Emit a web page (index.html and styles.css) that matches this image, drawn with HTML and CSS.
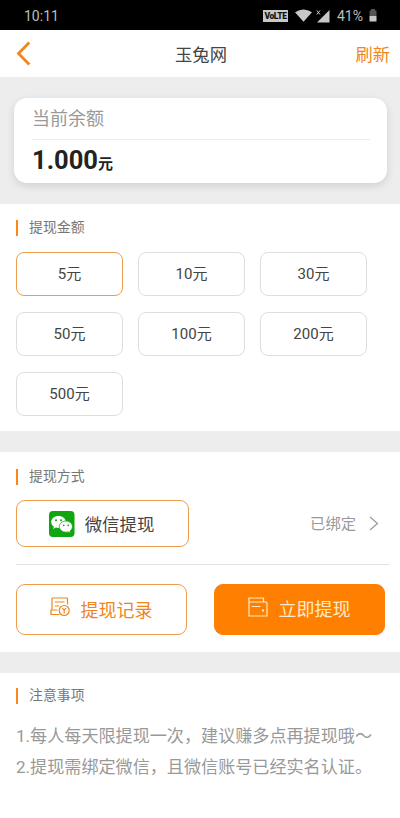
FILE: index.html
```
<!DOCTYPE html>
<html lang="zh-CN">
<head>
<meta charset="utf-8">
<meta name="viewport" content="width=device-width, initial-scale=1">
<title>玉兔网</title>
<link rel="stylesheet" href="styles.css">
</head>
<body>
<div class="status">
  <span class="time">10:11</span>
  <div class="indicators">
    <span class="volte"><span>VoLTE</span></span>
    <svg class="wifi" width="17" height="13" viewBox="0 0 17 13"><path d="M0 3.3Q8.500-2.500 17 3.300L8.500 12.800Z"/></svg>
    <svg class="signal" width="14" height="14" viewBox="0 0 14 14"><path d="M13.500 1V13.500H1Z"/><path class="cross" d="M.8 1.500l3.200 4M4 1.500l-3.200 4"/></svg>
    <span class="percent">41%</span>
    <svg class="battery" width="8" height="13" viewBox="0 0 8 13"><path class="empty" d="M2 0h4v1.500h1.500V7h-7V1.500H2z"/><path d="M.5 7h7v5.500h-7z"/></svg>
  </div>
</div>
<header class="nav">
  <svg class="back" width="16" height="25" viewBox="0 0 16 25"><path d="M13.300 1.500L2.500 12.500L13.300 23.500"/></svg>
  <h1>玉兔网</h1>
  <span class="refresh">刷新</span>
</header>
<section class="balance">
  <div class="card">
    <div class="label">当前余额</div>
    <div class="amount">1.000<small>元</small></div>
  </div>
</section>
<section class="panel amounts">
  <h2>提现金额</h2>
  <div class="options">
    <div class="option selected">5元</div>
    <div class="option">10元</div>
    <div class="option">30元</div>
    <div class="option">50元</div>
    <div class="option">100元</div>
    <div class="option">200元</div>
    <div class="option">500元</div>
  </div>
</section>
<section class="panel methods">
  <h2>提现方式</h2>
  <div class="method-row">
    <div class="method">
      <svg width="26" height="26" viewBox="0 0 26 26">
        <rect width="25.500" height="26" rx="4" fill="#12a512"/>
        <path fill="#fff" d="M9.500 5C5.300 5 2.200 7.700 2.200 11c0 1.900 1 3.500 2.700 4.600L4.200 18l2.700-1.500c.9.300 1.700.4 2.600.4 4.200 0 7.400-2.600 7.400-5.900S13.700 5 9.500 5z"/>
        <path fill="#fff" stroke="#12a512" stroke-width=".8" d="M17 10c-3.800 0-6.700 2.500-6.700 5.600s2.900 5.600 6.700 5.600c.8 0 1.500-.1 2.200-.3l2.300 1.300-.6-2.100c1.600-1 2.600-2.600 2.600-4.500C23.500 12.500 20.600 10 17 10z"/>
        <g fill="#12a512"><circle cx="7" cy="9.200" r="1"/><circle cx="12" cy="9.200" r="1"/><circle cx="14.700" cy="14.300" r=".9"/><circle cx="19.200" cy="14.300" r=".9"/></g>
      </svg>
      <span>微信提现</span>
    </div>
    <div class="bound"><span>已绑定</span><svg width="10" height="15" viewBox="0 0 10 15"><path d="M1 1L8.500 7.500L1 14"/></svg></div>
  </div>
  <div class="actions">
    <div class="button outline">
      <svg width="20" height="20" viewBox="0 0 20 20"><path d="M17.500 7.500V2Q17.500 1 16.500 1H3Q2 1 2 2V13M4.500 13H1V17.500H9.500M4.800 5H14.500M4.800 9H9.500M4.500 13H7.500"/><circle cx="14.200" cy="13.500" r="5"/><path d="M12.300 11.200l1.900 2 1.900-2M14.200 13.200v3.300"/></svg>
      <span>提现记录</span>
    </div>
    <div class="button solid">
      <svg width="20" height="20" viewBox="0 0 20 20"><path d="M15.500 5V1H1V19H19V6.500Q19 5 17.500 5H1M3.800 9.500H12.500"/><path class="clasp" d="M14 13.500h2"/></svg>
      <span>立即提现</span>
    </div>
  </div>
</section>
<section class="panel notes">
  <h2>注意事项</h2>
  <p>1.每人每天限提现一次，建议赚多点再提现哦～</p>
  <p>2.提现需绑定微信，且微信账号已经实名认证。</p>
</section>
</body>
</html>
```
FILE: styles.css
```
* { box-sizing: border-box; }
body {
  margin: 0;
  height: 818px;
  overflow: hidden;
  background: #fff;
  color: #444;
  font-family: Roboto, "Noto Sans CJK SC", sans-serif;
}
h1, h2, p { margin: 0; font-weight: 400; }
svg { display: block; flex: none; }

.status {
  height: 30px;
  padding: 1px 23px 0 24px;
  display: flex;
  align-items: center;
  justify-content: space-between;
  background: #000;
  color: #bdbdbd;
  font-size: 14px;
  line-height: 28px;
}
.indicators { display: flex; align-items: center; }
.indicators svg { fill: #c8c8c8; }
.volte {
  width: 25px;
  height: 12px;
  background: #c8c8c8;
  color: #111;
  font-size: 8.500px;
  font-weight: 900;
  line-height: 12px;
  letter-spacing: -.4px;
  text-align: center;
}
.wifi { margin-left: 7px; }
.signal { margin-left: 4px; }
.signal .cross { stroke: #c8c8c8; fill: none; }
.percent { width: 27px; margin-left: 7px; }
.battery { margin-left: 5px; }
.battery .empty { fill: #555; }

.nav {
  height: 47px;
  padding: 0 10px 0 16px;
  display: grid;
  grid-template-columns: 50px 1fr 54px;
  align-items: center;
}
.back { fill: none; stroke: #f0861c; stroke-width: 2.800; }
.nav h1 { font-size: 17.300px; line-height: 24px; text-align: center; margin-top: 2px; }
.refresh { color: #f0861c; font-size: 17.300px; line-height: 24px; text-align: right; margin-top: 2px; }

.balance { height: 127px; padding: 21px 13px 0 14px; background: #ededed; }
.card {
  height: 85px;
  padding: 0 17px 0 18px;
  border-radius: 13px;
  background: #fff;
  box-shadow: 0 3px 8px rgba(0, 0, 0, .12);
}
.label {
  height: 42px;
  border-bottom: 1px solid #ececec;
  color: #999;
  font-size: 18px;
  line-height: 41px;
}
.amount { color: #222; font-size: 25.500px; font-weight: 700; line-height: 41px; }
.amount small { font-size: 15px; }

.panel { padding: 0 10px 0 16px; border-bottom: 21px solid #ededed; }
.panel h2 {
  height: 16px;
  padding-left: 11px;
  border-left: 2px solid #ff8419;
  color: #777;
  font-size: 13.900px;
  line-height: 14px;
}
.amounts { height: 248px; padding-top: 16px; }
.options {
  margin-top: 16px;
  display: grid;
  grid-template-columns: repeat(3, 107px);
  grid-auto-rows: 44px;
  gap: 16px 15px;
}
.option {
  border: 1px solid #dedede;
  border-radius: 8px;
  font-size: 15px;
  line-height: 42px;
  text-align: center;
}
.option.selected { border-color: #ed9c4c; }

.methods { height: 221px; padding-top: 17px; }
.method-row {
  height: 65px;
  margin-top: 15px;
  display: flex;
  align-items: flex-start;
  justify-content: space-between;
  border-bottom: 1px solid #e2e2e2;
}
.method {
  width: 173px;
  height: 47px;
  padding-right: 2px;
  display: flex;
  align-items: center;
  justify-content: center;
  gap: 10px;
  border: 1px solid #ed9c4c;
  border-radius: 9px;
  font-size: 17.400px;
  line-height: 26px;
}
.method span { padding-top: 2px; }
.bound {
  height: 47px;
  padding-right: 11px;
  display: flex;
  align-items: center;
  gap: 13px;
  color: #999;
  font-size: 15.300px;
}
.bound span { padding-bottom: 3px; }
.bound svg { fill: none; stroke: #999; stroke-width: 1.200; }
.actions { margin-top: 19px; padding-right: 5px; display: flex; justify-content: space-between; }
.button {
  width: 171px;
  height: 51px;
  padding-right: 1px;
  display: flex;
  align-items: center;
  justify-content: center;
  gap: 11px;
  border: 1px solid #ed9c4c;
  border-radius: 9px;
  color: #ed861f;
  font-size: 18px;
  line-height: 26px;
}
.button span { padding-top: 1px; }
.button.outline span { padding-top: 3px; }
.button svg { margin-bottom: 5px; fill: none; stroke: currentColor; stroke-width: 1.200; }
.button .clasp { stroke-width: 2; }
.button.solid { border-color: #ff8000; background: #ff8000; color: #ffebc8; }

.notes { padding-top: 15px; border: 0; }
.notes h2 { margin-bottom: 17px; }
.notes p { color: #999; font-size: 17.100px; line-height: 31px; white-space: nowrap; }
```
